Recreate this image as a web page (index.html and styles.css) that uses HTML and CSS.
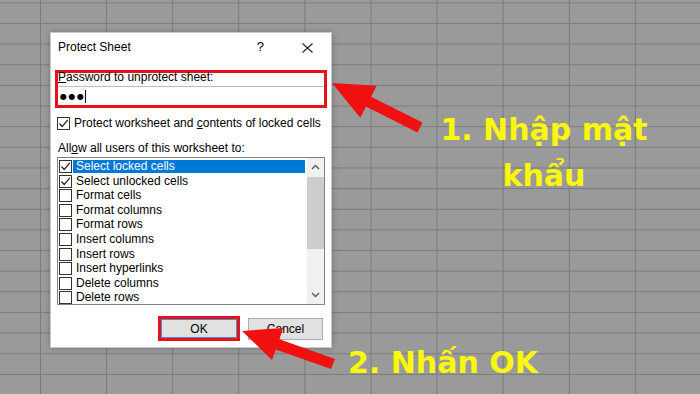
FILE: index.html
```html
<!DOCTYPE html>
<html lang="vi">
<head>
    <meta charset="UTF-8">
    <meta name="viewport" content="width=device-width, initial-scale=1.0">
    <title>Protect Sheet</title>
    <link rel="stylesheet" href="styles.css">
</head>
<body>
    <div class="sheet">
        <!-- Protect Sheet dialog -->
        <div class="dialog">
            <div class="titlebar">
                <span class="title">Protect Sheet</span>
                <span class="help">?</span>
                <svg class="close" width="11" height="10" viewBox="0 0 11 10">
                    <path d="M0.5 0.5 L10.5 9.5 M10.5 0.5 L0.5 9.5" stroke="#222" stroke-width="1.1" fill="none"/>
                </svg>
            </div>

            <div class="pw-box">
                <div class="pw-label"><u>P</u>assword to unprotect sheet:</div>
                <div class="pw-input"><span class="dots">●●●</span><span class="caret"></span></div>
            </div>

            <div class="check-row">
                <span class="cb">
                    <svg width="11" height="11" viewBox="0 0 11 11"><polyline points="1.5,5.5 4.2,8.5 9.8,1.8" stroke="#222" stroke-width="1.2" fill="none"/></svg>
                </span>
                <span>Protect worksheet and <u>c</u>ontents of locked cells</span>
            </div>

            <div class="allow">All<u>o</u>w all users of this worksheet to:</div>

            <div class="list">
                <ul class="items">
                    <li class="item selected">
                        <span class="cb"><svg width="11" height="11" viewBox="0 0 11 11"><polyline points="1.5,5.5 4.2,8.5 9.8,1.8" stroke="#222" stroke-width="1.2" fill="none"/></svg></span>
                        <span class="item-text">Select locked cells</span>
                    </li>
                    <li class="item">
                        <span class="cb"><svg width="11" height="11" viewBox="0 0 11 11"><polyline points="1.5,5.5 4.2,8.5 9.8,1.8" stroke="#222" stroke-width="1.2" fill="none"/></svg></span>
                        <span class="item-text">Select unlocked cells</span>
                    </li>
                    <li class="item"><span class="cb"></span><span class="item-text">Format cells</span></li>
                    <li class="item"><span class="cb"></span><span class="item-text">Format columns</span></li>
                    <li class="item"><span class="cb"></span><span class="item-text">Format rows</span></li>
                    <li class="item"><span class="cb"></span><span class="item-text">Insert columns</span></li>
                    <li class="item"><span class="cb"></span><span class="item-text">Insert rows</span></li>
                    <li class="item"><span class="cb"></span><span class="item-text">Insert hyperlinks</span></li>
                    <li class="item"><span class="cb"></span><span class="item-text">Delete columns</span></li>
                    <li class="item"><span class="cb"></span><span class="item-text">Delete rows</span></li>
                </ul>
                <div class="scrollbar">
                    <div class="sb-btn">
                        <svg width="9" height="6" viewBox="0 0 9 6"><polyline points="1,5 4.5,1.5 8,5" stroke="#555" stroke-width="1.3" fill="none"/></svg>
                    </div>
                    <div class="sb-thumb"></div>
                    <div class="sb-track"></div>
                    <div class="sb-btn">
                        <svg width="9" height="6" viewBox="0 0 9 6"><polyline points="1,1 4.5,4.5 8,1" stroke="#555" stroke-width="1.3" fill="none"/></svg>
                    </div>
                </div>
            </div>

            <div class="buttons">
                <div class="ok-mark"><button class="btn btn-ok">OK</button></div>
                <button class="btn btn-cancel">Cancel</button>
            </div>
        </div>

        <!-- annotations -->
        <div class="note note-1">1. Nhập mật<br>khẩu</div>
        <div class="note note-2">2. Nhấn OK</div>

        <svg class="arrows" width="700" height="394" viewBox="0 0 700 394">
            <polygon points="332,83 376.7,85.7 371,96.8 422.5,122.6 417.5,132.4 366,106.6 360.3,117.7" fill="#f01010"/>
            <polygon points="242,331 283,328 279.5,339.3 334.9,358.9 331.1,369.1 275.7,349.5 272,360" fill="#f01010"/>
        </svg>
    </div>
</body>
</html>
```

FILE: styles.css
```css
body {
    margin: 0;
    padding: 0;
    font-family: "Liberation Sans", Arial, sans-serif;
}

.sheet {
    position: relative;
    width: 700px;
    height: 394px;
    overflow: hidden;
    background-color: #9a9a9a;
    background-image:
        linear-gradient(to right, #7b7b7b 1px, transparent 1px),
        linear-gradient(to bottom, #7b7b7b 1px, transparent 1px);
    background-size: 66.1px 100%, 100% 20.65px;
    background-position: 40px 0, 0 2.35px;
}

/* dialog */
.dialog {
    position: absolute;
    left: 50px;
    top: 32px;
    width: 282px;
    height: 316px;
    box-sizing: border-box;
    background: #fff;
    border: 1px solid #c9c9c9;
    box-shadow: 0 0 6px rgba(0, 0, 0, 0.25);
    font-size: 12px;
    color: #000;
}

.titlebar {
    display: flex;
    align-items: flex-start;
    height: 37px;
    box-sizing: border-box;
    padding: 7px 18px 0 7px;
    line-height: 14px;
}

.title {
    flex: 1;
}

.help {
    font-size: 13px;
}

.close {
    margin: 3px 0 0 38px;
}

.pw-box {
    height: 38px;
    box-sizing: border-box;
    margin: 0 4px;
    border: 3px solid #e3121b;
}

.pw-label {
    line-height: 13px;
    margin-top: -2px;
    margin-bottom: 2px;
    white-space: nowrap;
}

.pw-input {
    display: flex;
    align-items: center;
    height: 19px;
    box-sizing: border-box;
    border-top: 1px solid #bdbdbd;
    padding-left: 2px;
}

.dots {
    font-family: "DejaVu Sans", sans-serif;
    font-size: 8px;
    letter-spacing: 1.5px;
}

.caret {
    width: 1px;
    height: 13px;
    background: #000;
}

.cb {
    display: flex;
    align-items: center;
    justify-content: center;
    width: 13px;
    height: 13px;
    box-sizing: border-box;
    border: 1px solid #333;
    background: #fff;
    flex-shrink: 0;
}

.check-row {
    display: flex;
    align-items: center;
    gap: 4px;
    margin-top: 9px;
    padding-left: 6px;
    line-height: 13px;
    white-space: nowrap;
}

.allow {
    margin-top: 11px;
    padding-left: 7px;
    line-height: 14px;
}

/* list box */
.list {
    display: flex;
    height: 148px;
    box-sizing: border-box;
    margin: 2px 6px 0;
    border: 1px solid #838383;
}

.items {
    flex: 1;
    list-style: none;
    margin: 0;
    padding: 1.5px 2px 0 0;
}

.item {
    display: flex;
    align-items: center;
    height: 14.56px;
}

.item .cb {
    margin-left: 1px;
}

.item-text {
    flex: 1;
    margin-left: 1px;
    padding-left: 3px;
    line-height: 13px;
}

.item.selected .item-text {
    background: #0078d7;
    color: #fff;
}

.scrollbar {
    display: flex;
    flex-direction: column;
    width: 17px;
    background: #f0f0f0;
}

.sb-btn {
    display: flex;
    align-items: center;
    justify-content: center;
    height: 18px;
}

.sb-thumb {
    height: 72px;
    margin-top: 1px;
    background: #cdcdcd;
}

.sb-track {
    flex: 1;
}

/* buttons */
.buttons {
    display: flex;
    justify-content: flex-end;
    align-items: center;
    gap: 8px;
    margin-top: 11px;
    padding-right: 8px;
}

.ok-mark {
    width: 82px;
    height: 25px;
    box-sizing: border-box;
    border: 3px solid #e3121b;
}

.btn {
    font-family: "Liberation Sans", Arial, sans-serif;
    font-size: 12px;
    color: #000;
    background: #e1e1e1;
    border: 1px solid #adadad;
    padding: 0;
    margin: 0;
}

.btn-ok {
    width: 100%;
    height: 100%;
    border-color: #4a8fd0;
}

.btn-cancel {
    width: 75px;
    height: 22px;
}

/* annotations */
.note {
    position: absolute;
    font-family: "DejaVu Sans", sans-serif;
    font-weight: bold;
    font-size: 30px;
    color: #fbf70a;
    white-space: nowrap;
}

.note-1 {
    left: 424px;
    top: 107px;
    width: 240px;
    text-align: center;
    line-height: 46px;
}

.note-2 {
    left: 348px;
    top: 343px;
    line-height: 40px;
}

.arrows {
    position: absolute;
    left: 0;
    top: 0;
}
```
